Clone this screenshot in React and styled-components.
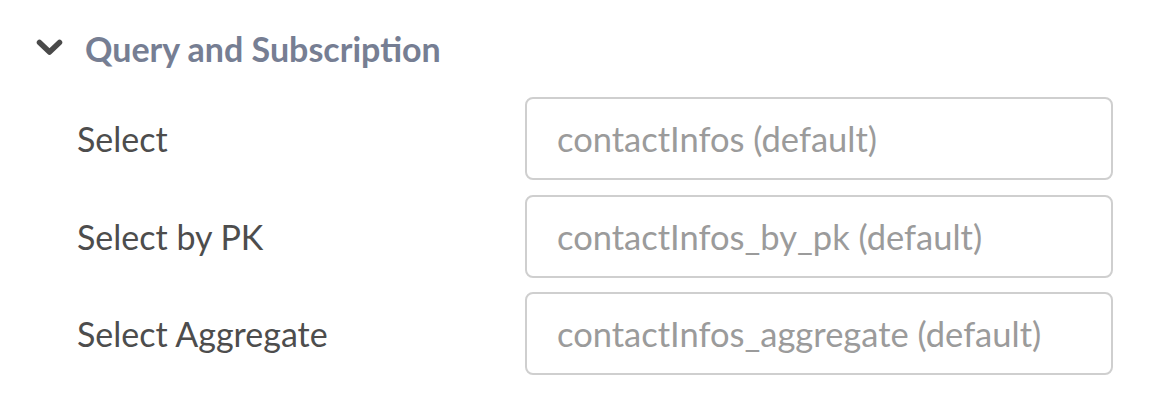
import React from "react";
import styled, { createGlobalStyle } from "styled-components";

const Global = createGlobalStyle`
  html, body { margin: 0; padding: 0; background: #ffffff; }
  body { font-family: "Lato", "Open Sans", sans-serif; }
`;

const Section = styled.section`
  padding: 24px 0 0 36px;
  width: 1077px;
`;

const Header = styled.div`
  display: flex;
  align-items: center;
  gap: 22px;
  height: 48px;
  margin-bottom: 25px;
`;

const Chevron = styled.svg`
  width: 27px;
  height: 18px;
  flex: none;
`;

const Title = styled.h3`
  margin: 0;
  font-size: 34px;
  font-weight: 700;
  color: #767e93;
  letter-spacing: 0;
`;

const Rows = styled.div`
  display: flex;
  flex-direction: column;
  gap: 14.5px;
  padding-left: 41px;
`;

const Row = styled.div`
  display: grid;
  grid-template-columns: 448px 588px;
  align-items: center;
`;

const Label = styled.label`
  font-size: 34px;
  font-weight: 400;
  color: #4d4d4d;
`;

const Input = styled.input`
  box-sizing: border-box;
  height: 83px;
  width: 100%;
  border: 2px solid #cfcfcf;
  border-radius: 8px;
  padding: 0 30px;
  font-family: inherit;
  font-size: 34.5px;
  color: #4d4d4d;
  outline: none;
  &::placeholder { color: #9b9b9b; }
`;

const rows = [
  ["Select", "contactInfos (default)"],
  ["Select by PK", "contactInfos_by_pk (default)"],
  ["Select Aggregate", "contactInfos_aggregate (default)"],
];

export default function App() {
  return (
    <>
      <Global />
      <Section>
        <Header>
          <Chevron viewBox="0 0 27 18">
            <polyline points="3.5,3.5 13.5,13 23.5,3.5" fill="none" stroke="#4a4a4a" strokeWidth="5.5" strokeLinecap="round" strokeLinejoin="round" />
          </Chevron>
          <Title>Query and Subscription</Title>
        </Header>
        <Rows>
          {rows.map(([l, p]) => (
            <Row key={l}>
              <Label>{l}</Label>
              <Input placeholder={p} />
            </Row>
          ))}
        </Rows>
      </Section>
    </>
  );
}
